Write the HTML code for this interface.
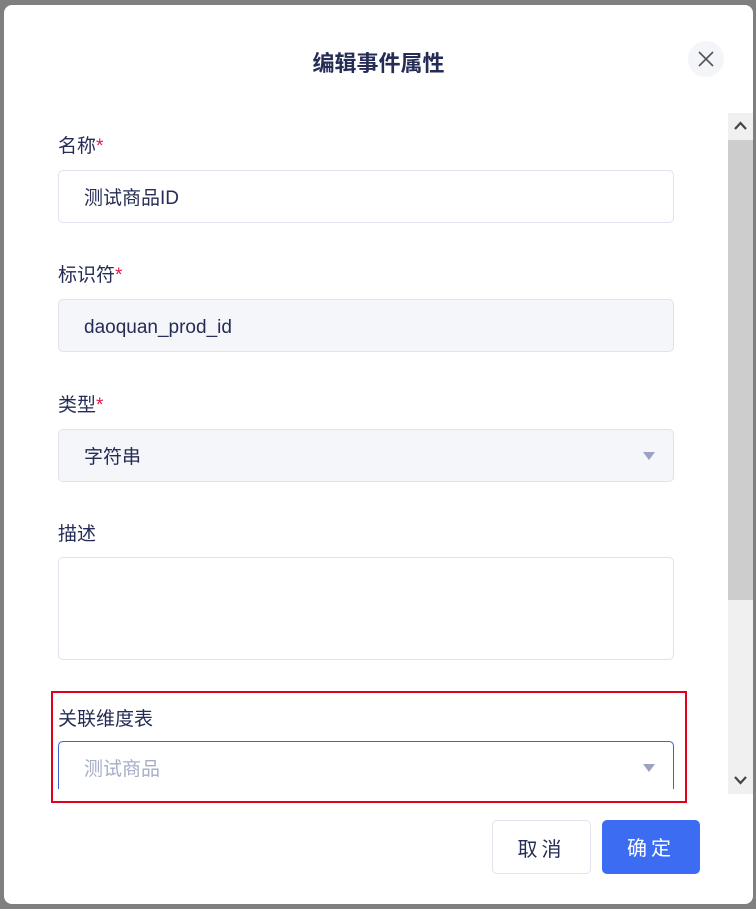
<!DOCTYPE html><html><head><meta charset="utf-8"><style>
body{margin:0;width:756px;height:909px;background:#7f7f7f;font-family:"Liberation Sans","Noto Sans CJK SC",sans-serif;position:relative;overflow:hidden}
.dlg{position:absolute;left:4px;top:5px;width:749px;height:899px;background:#fff;border-radius:8px;overflow:hidden}
.t{position:absolute;left:0;right:0;top:41px;text-align:center;font-size:22px;font-weight:bold;color:#252c56}
.x{position:absolute;left:684px;top:36px;width:36px;height:36px;border-radius:50%;background:#f4f5f9}
.lab{position:absolute;left:54px;font-size:19px;color:#252c56}
.lab b{color:#e8164a;font-weight:normal}
.in{position:absolute;left:54px;width:616px;height:53px;border:1px solid #e1e2ee;border-radius:5px;box-sizing:border-box;font-size:19px;color:#252c56;padding-left:25px;line-height:55px}
.g{background:#f5f6fa}
.tri{position:absolute;right:18px;top:22px;width:0;height:0;border-left:6px solid transparent;border-right:6px solid transparent;border-top:8px solid #9ba2c2}
.sb{position:absolute;left:724px;top:108px;width:25px;height:681px;background:#f0f0f0}
.th{position:absolute;left:0;top:27px;width:25px;height:460px;background:#cdcdcd}
.btn{position:absolute;top:815px;height:54px;border-radius:5px;font-size:20px;line-height:58px;text-align:center;box-sizing:border-box;letter-spacing:4px}
</style></head><body>
<div class="dlg">
<div class="t">编辑事件属性</div>
<div class="x"><svg width="36" height="36"><path d="M11 11L25 25M25 11L11 25" stroke="#555" stroke-width="1.6"/></svg></div>
<div class="lab" style="top:126px">名称<b>*</b></div>
<div class="in" style="top:165px">测试商品ID</div>
<div class="lab" style="top:255px">标识符<b>*</b></div>
<div class="in g" style="top:294px">daoquan_prod_id</div>
<div class="lab" style="top:385px">类型<b>*</b></div>
<div class="in g" style="top:424px">字符串<div class="tri"></div></div>
<div class="lab" style="top:514px">描述</div>
<div class="in" style="top:552px;height:103px"></div>
<div class="lab" style="top:699px">关联维度表</div>
<div style="position:absolute;left:54px;top:736px;width:616px;height:48px;overflow:hidden"><div class="in" style="left:0;top:0;border-color:#3b63d6;box-shadow:0 0 6px rgba(80,90,160,.25);color:#a8adc6">测试商品<div class="tri"></div></div></div>
<div style="position:absolute;left:47px;top:686px;width:636px;height:112px;border:2px solid #e3001b;box-sizing:border-box"></div>
<div class="sb"><div class="th"></div>
<svg style="position:absolute;left:6px;top:8px" width="13" height="10"><path d="M1 8L6.5 2L12 8" stroke="#444" stroke-width="2.2" fill="none"/></svg>
<svg style="position:absolute;left:6px;top:662px" width="13" height="10"><path d="M1 2L6.5 8L12 2" stroke="#444" stroke-width="2.2" fill="none"/></svg></div>
<div class="btn" style="left:488px;width:99px;border:1px solid #e1e2ee;color:#252c56">取消</div>
<div class="btn" style="left:598px;width:98px;background:#3b6cf2;color:#fff">确定</div>
</div>
</body></html>
